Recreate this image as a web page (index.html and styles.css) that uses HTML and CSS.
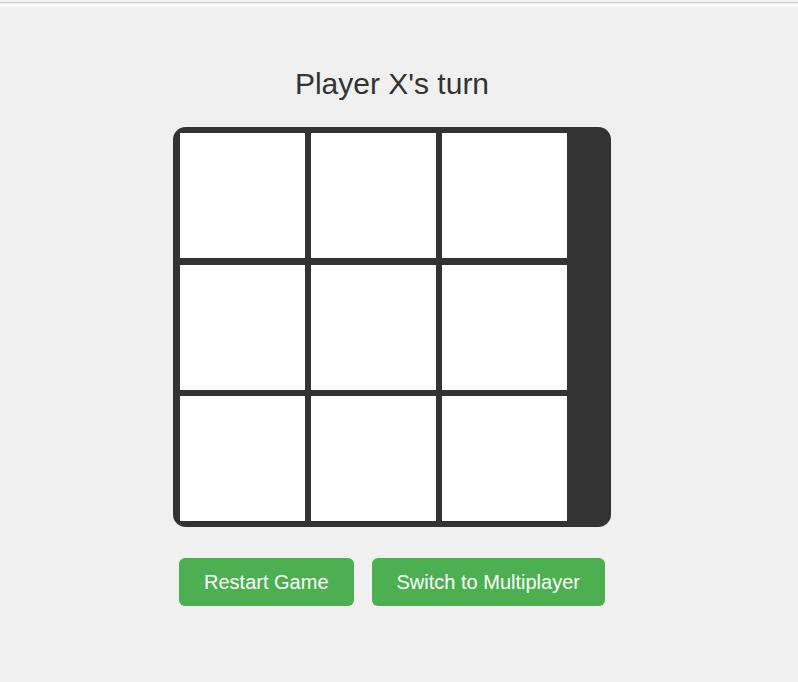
FILE: index.html
```html
<!DOCTYPE html>
<html lang="en">
<head>
    <meta charset="UTF-8">
    <meta name="viewport" content="width=device-width, initial-scale=1.0">
    <title>Tic Tac Toe</title>
    <link rel="stylesheet" href="styles.css">
</head>
<body>
    <div class="top-rule"></div>
    <div class="container">
        <h1 id="status">Player X's turn</h1>
        <div class="board" id="board">
            <div class="cell" data-index="0"></div>
            <div class="cell" data-index="1"></div>
            <div class="cell" data-index="2"></div>
            <div class="cell" data-index="3"></div>
            <div class="cell" data-index="4"></div>
            <div class="cell" data-index="5"></div>
            <div class="cell" data-index="6"></div>
            <div class="cell" data-index="7"></div>
            <div class="cell" data-index="8"></div>
        </div>
        <div class="controls">
            <button id="restart-btn">Restart Game</button>
            <button id="mode-btn">Switch to Multiplayer</button>
        </div>
    </div>
</body>
</html>
```

FILE: styles.css
```css
body {
    font-family: "Liberation Sans", Arial, sans-serif;
    background-color: #f0f0f0;
    color: #333;
    margin: 0;
}

.top-rule {
    height: 2px;
    border-bottom: 1px solid #c9c9c9;
    background-color: #f3f3f3;
    box-shadow: 0 4px 0 #f8f8f8;
}

.container {
    width: 784px;
    display: flex;
    flex-direction: column;
    align-items: center;
    padding-top: 64px;
}

h1 {
    font-size: 30px;
    font-weight: normal;
    margin: 0 0 26px 0;
}

.board {
    width: 437.5px;
    height: 400px;
    box-sizing: border-box;
    display: grid;
    grid-template-columns: repeat(3, 125px);
    grid-template-rows: repeat(3, 125px);
    gap: 6.25px;
    padding: 6.25px;
    background-color: #333;
    border-radius: 12.5px;
}

.cell {
    background-color: #fff;
    cursor: pointer;
}

.controls {
    display: flex;
    gap: 18px;
    margin-top: 31px;
}

.controls button {
    font-family: "Liberation Sans", Arial, sans-serif;
    font-size: 20px;
    padding: 12.5px 25px;
    height: 48px;
    background-color: #4caf50;
    color: white;
    border: none;
    border-radius: 6px;
    cursor: pointer;
}
```
